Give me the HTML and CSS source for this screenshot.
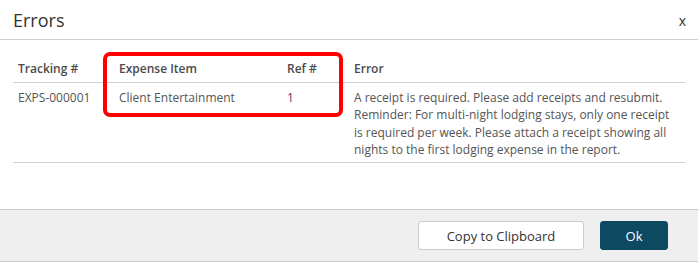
FILE: index.html
```html
<!DOCTYPE html>
<html lang="en">
<head>
  <meta charset="UTF-8">
  <meta name="viewport" content="width=device-width, initial-scale=1.0">
  <title>Errors</title>
  <link rel="stylesheet" href="styles.css">
</head>
<body>
  <div class="dialog">
    <div class="dialog-header">
      <span class="title">Errors</span>
      <button class="close">x</button>
    </div>

    <div class="dialog-body">
      <table class="errors">
        <thead>
          <tr>
            <th class="col-track">Tracking #</th>
            <th class="col-item">Expense Item</th>
            <th class="col-ref">Ref #</th>
            <th class="col-error">Error</th>
          </tr>
        </thead>
        <tbody>
          <tr>
            <td>EXPS-000001</td>
            <td>Client Entertainment</td>
            <td class="ref">1</td>
            <td>A receipt is required. Please add receipts and resubmit. Reminder: For multi-night lodging stays, only one receipt is required per week. Please attach a receipt showing all nights to the first lodging expense in the report.</td>
          </tr>
        </tbody>
      </table>
      <!-- annotation drawn over the table -->
      <div class="highlight"></div>
    </div>

    <div class="dialog-footer">
      <button class="btn btn-light">Copy to Clipboard</button>
      <button class="btn btn-dark">Ok</button>
    </div>
  </div>
</body>
</html>
```

FILE: styles.css
```css
* {
  font-family: "Open Sans", Arial, Helvetica, sans-serif;
  box-sizing: border-box;
}

body {
  margin: 0;
  background: white;
}

.dialog {
  width: 698px;
  height: 262px;
  display: flex;
  flex-direction: column;
  border-bottom: 1px solid #c8c8c8;
}

.dialog-header {
  height: 40px;
  display: flex;
  align-items: center;
  justify-content: space-between;
  padding: 0 12px 0 13px;
  border-bottom: 1px solid #cfcfcf;
}
.title {font-size: 18px; color: #333;}
.close {
  background: none;
  border: none;
  padding: 0;
  font-size: 14px;
  color: #333;
  margin-top: 1px;
}

.dialog-body {
  position: relative;
  flex: 1;
  padding: 14px 13px 0 13px;
}

.errors {
  width: 672px;
  border-collapse: collapse;
  font-size: 12px;
}
.errors th {
  text-align: left;
  font-weight: 600;
  color: #4a4a4a;
  padding: 6px 5px 4px 5px;
  border-bottom: 1px solid #cfcfcf;
  line-height: 18px;
}
.errors td {
  vertical-align: top;
  color: #555;
  padding: 6px 5px 3px 5px;
  border-bottom: 1px solid #cfcfcf;
  line-height: 17.4px;
}
.errors td.ref {color: #6b2c7a;}
.col-track {width: 101px;}
.col-item {width: 168px;}
.col-ref {width: 67px;}

.highlight {
  position: absolute;
  left: 103px;
  top: 12px;
  width: 240px;
  height: 65px;
  border: 4px solid #f00;
  border-radius: 7px;
}

.dialog-footer {
  height: 52px;
  background: #efefef;
  border-top: 1px solid #c8c8c8;
  display: flex;
  justify-content: flex-end;
  align-items: center;
  gap: 16px;
  padding-right: 30px;
}
.btn {
  height: 29px;
  font-size: 13px;
  border-radius: 3px;
  padding: 0 12px;
}
.btn-light {
  width: 166px;
  background: white;
  border: 1px solid #ccc;
  color: #333;
}
.btn-dark {
  width: 68px;
  background: #0d4a62;
  border: 1px solid #0d4a62;
  color: white;
}
```
